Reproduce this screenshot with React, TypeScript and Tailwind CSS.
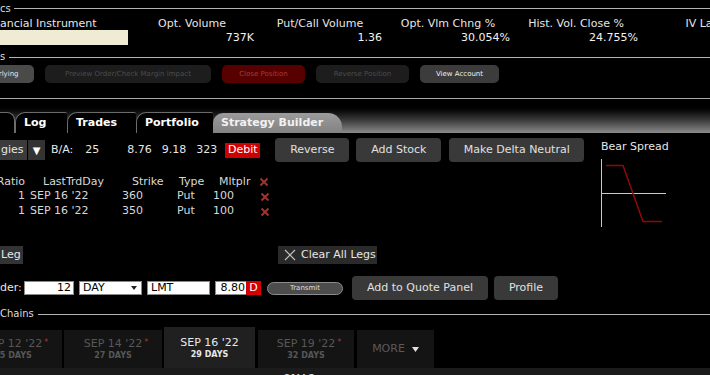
import React from "react";

const RedX = () => (
  <svg width="10" height="10" viewBox="0 0 10 10">
    <path d="M1.5 1.5 L8.5 8.5 M8.5 1.5 L1.5 8.5" stroke="#a0332f" strokeWidth="2" />
  </svg>
);

function SectionHeader({ label, lineGap }: { label: string; lineGap: string }) {
  return (
    <div className="flex h-[14px] items-center">
      <span className="text-[10px] leading-none text-[#dcdcdc]">{label}</span>
      <div className={`${lineGap} h-px flex-1 bg-[#b4b4b4]`} />
    </div>
  );
}

const stats = [
  { label: "Opt. Volume", value: "737K" },
  { label: "Put/Call Volume", value: "1.36" },
  { label: "Opt. Vlm Chng %", value: "30.054%" },
  { label: "Hist. Vol. Close %", value: "24.755%" },
  { label: "IV Last", value: "" },
];

const legs = [
  { ratio: "1", day: "SEP 16 '22", strike: "360", type: "Put", mult: "100" },
  { ratio: "1", day: "SEP 16 '22", strike: "350", type: "Put", mult: "100" },
];

function DateTab({ date, days, star, active, className }: { date: string; days: string; star?: boolean; active?: boolean; className: string }) {
  return (
    <div
      className={`${className} flex shrink-0 flex-col items-center justify-center ${
        active ? "h-[41px] bg-[#202020] text-[#e8e8e8]" : "h-[38px] bg-[#141414] text-[#575757]"
      }`}
    >
      <div className="relative text-[11px] leading-[13px]">
        {date}
        {star && <span className="absolute -right-[6px] -top-[1px] text-[8px] text-[#a33a35]">*</span>}
      </div>
      <div className="text-[8px] font-bold leading-[11px]">{days}</div>
    </div>
  );
}

export default function App() {
  return (
    <div className="relative h-[375px] w-[710px] overflow-hidden bg-black font-['DejaVu_Sans',sans-serif] text-[#e6e6e6]">
      {/* statistics */}
      <div className="flex h-[17px] items-center">
        <span className="text-[10px] leading-none text-[#dcdcdc]">cs</span>
        <div className="ml-[3px] h-px flex-1 bg-[#b4b4b4]" />
      </div>
      <div className="grid grid-cols-[128px_128px_128px_128px_128px_128px] text-[11px] leading-[13px] whitespace-nowrap">
        <div>ancial Instrument</div>
        {stats.map((s) => (
          <div key={s.label} className="text-center">{s.label}</div>
        ))}
        <div className="h-[15px] bg-[#efecd3]" />
        {stats.map((s) => (
          <div key={s.label + "v"} className="pr-[2px] text-right leading-[15px] text-[#f2f2f2]">{s.value}</div>
        ))}
      </div>

      {/* actions */}
      <div className="mt-[5px]">
        <SectionHeader label="s" lineGap="ml-[4px]" />
      </div>
      <div className="mt-[1px] flex h-[18px] gap-[11px] text-[7px] whitespace-nowrap">
        <div className="-ml-[35px] flex w-[69px] shrink-0 items-center justify-center rounded-[5px] bg-[#4a4a4a] text-[#e4e4e4]">Underlying</div>
        <div className="flex w-[166px] shrink-0 items-center justify-center rounded-[5px] bg-[#1d1d1d] text-[#4c4c4c]">Preview Order/Check Margin Impact</div>
        <div className="flex w-[83px] shrink-0 items-center justify-center rounded-[5px] bg-[#580000] text-[#a33c3c]">Close Position</div>
        <div className="flex w-[93px] shrink-0 items-center justify-center rounded-[5px] bg-[#1d1d1d] text-[#4c4c4c]">Reverse Position</div>
        <div className="flex w-[79px] shrink-0 items-center justify-center rounded-[5px] bg-[#3c3c3c] text-[#f0f0f0]">View Account</div>
      </div>
      <div className="mt-[15px] h-px bg-[#a8a8a8]" />

      {/* tabs */}
      <div className="flex h-[34px] items-end bg-linear-to-b from-black from-15% to-[#8c8c8c] text-[11px] font-bold text-white">
        <div className="h-[21px] w-[15px] shrink-0 rounded-tr-[8px] border-t border-r border-[#6c6c6c] bg-black" />
        {[
          { t: "Log", w: "w-[52px]" },
          { t: "Trades", w: "w-[69px]" },
          { t: "Portfolio", w: "w-[77px]" },
        ].map((tab) => (
          <div key={tab.t} className={`${tab.w} flex h-[21px] shrink-0 items-center rounded-tl-[10px] rounded-tr-[2px] border-t border-l border-[#6c6c6c] bg-black pl-[8px]`}>
            {tab.t}
          </div>
        ))}
        <div className="flex h-[20px] w-[129px] shrink-0 items-center rounded-tl-[10px] rounded-tr-[14px] bg-linear-to-b from-[#9c9c9c] to-[#828282] pl-[8px] text-[#f2f2f2]">
          Strategy Builder
        </div>
      </div>

      {/* strategy builder */}
      <div className="flex">
        <div className="w-[601px] shrink-0">
          <div className="mt-[5px] flex h-[24px] items-center text-[11px] whitespace-nowrap">
            <div className="flex h-[20px] w-[27px] items-center bg-[#3b3b3b] pl-[1px]">gies</div>
            <div className="ml-[1px] flex h-[20px] w-[17px] items-center justify-center bg-[#333] text-[10px] text-white">▼</div>
            <span className="ml-[6px]">B/A:</span>
            <span className="ml-[12px]">25</span>
            <span className="ml-[28px]">8.76</span>
            <span className="ml-[10px]">9.18</span>
            <span className="ml-[10px]">323</span>
            <span className="ml-[8px] flex h-[15px] w-[35px] items-center justify-center bg-[#d00000] text-white">Debit</span>
            <button className="ml-[15px] h-[24px] w-[74px] rounded-[4px] bg-[#393939] text-[#e0e0e0]">Reverse</button>
            <button className="ml-[7px] h-[24px] w-[85px] rounded-[4px] bg-[#393939] text-[#e0e0e0]">Add Stock</button>
            <button className="ml-[8px] h-[24px] w-[135px] rounded-[4px] bg-[#393939] text-[#e0e0e0]">Make Delta Neutral</button>
          </div>

          <div className="mt-[13px] grid grid-cols-[28px_92px_55px_36px_46px_20px] text-[11px] whitespace-nowrap text-[#d8d8d8]">
            <div className="flex h-[14px] items-center justify-end pr-[3px]">Ratio</div>
            <div className="flex h-[14px] items-center pl-[15px]">LastTrdDay</div>
            <div className="flex h-[14px] items-center pl-[12px]">Strike</div>
            <div className="flex h-[14px] items-center pl-[4px]">Type</div>
            <div className="flex h-[14px] items-center pl-[8px]">Mltplr</div>
            <div className="flex h-[14px] items-center pl-[2px]"><RedX /></div>
            {legs.map((l) => (
              <React.Fragment key={l.strike}>
                <div className="flex h-[15px] items-center justify-end pr-[3px]">{l.ratio}</div>
                <div className="flex h-[15px] items-center pl-[2px]">{l.day}</div>
                <div className="flex h-[15px] items-center pl-[2px]">{l.strike}</div>
                <div className="flex h-[15px] items-center pl-[2px]">{l.type}</div>
                <div className="flex h-[15px] items-center pl-[2px]">{l.mult}</div>
                <div className="flex h-[15px] items-center pl-[3px]"><RedX /></div>
              </React.Fragment>
            ))}
          </div>

          <div className="mt-[27px] flex h-[18px] text-[11px] whitespace-nowrap">
            <div className="flex w-[23px] items-center bg-[#333] pl-[1px]">Leg</div>
            <div className="ml-[255px] flex w-[99px] items-center bg-[#2a2a2a]">
              <svg width="12" height="12" viewBox="0 0 12 12" className="ml-[6px]">
                <path d="M1 1 L11 11 M11 1 L1 11" stroke="#bdbdbd" strokeWidth="1.2" />
              </svg>
              <span className="ml-[5px]">Clear All Legs</span>
            </div>
          </div>
        </div>

        <div className="pt-[7px]">
          <div className="text-[11px] leading-[14px] text-[#e6e6e6]">Bear Spread</div>
          <svg width="70" height="72" viewBox="0 0 70 72" className="mt-[5px]">
            <path d="M0.5 0 V68" stroke="#c8c8c8" strokeWidth="1" />
            <path d="M0 34.5 H65" stroke="#c8c8c8" strokeWidth="1" />
            <path d="M5 6.5 H22 L42 62.5 H61" stroke="#8e0a0a" strokeWidth="1.5" fill="none" />
          </svg>
        </div>
      </div>

      {/* order row */}
      <div className="mt-[12px] flex h-[24px] items-center text-[11px] whitespace-nowrap">
        <span className="w-[20px]">der:</span>
        <div className="ml-[4px] flex h-[14px] w-[50px] items-center justify-end border border-[#8a8a8a] bg-white pr-[2px] text-black">12</div>
        <div className="ml-[5px] flex h-[14px] w-[63px] items-center justify-between border border-[#8a8a8a] bg-white pl-[3px] pr-[4px] text-black">
          DAY
          <svg width="6" height="4" viewBox="0 0 6 4"><path d="M0 0 H6 L3 4 Z" fill="#222" /></svg>
        </div>
        <div className="ml-[5px] flex h-[14px] w-[63px] items-center border border-[#8a8a8a] bg-white pl-[3px] text-black">LMT</div>
        <div className="ml-[5px] flex h-[14px] w-[31px] items-center justify-end border border-r-0 border-[#8a8a8a] bg-white pr-px text-black">8.80</div>
        <div className="flex h-[14px] w-[15px] items-center justify-center bg-[#d40000] text-white">D</div>
        <div className="ml-[6px] flex h-[13px] w-[76px] items-center justify-center rounded-full border border-[#8c8c8c] bg-[#4c4c4c] text-[7px] text-[#dedede]">Transmit</div>
        <button className="ml-[9px] h-[24px] w-[136px] rounded-[4px] bg-[#393939] text-[#e0e0e0]">Add to Quote Panel</button>
        <button className="ml-[6px] h-[24px] w-[64px] rounded-[4px] bg-[#393939] text-[#e0e0e0]">Profile</button>
      </div>

      {/* option chains */}
      <div className="mt-[7px]">
        <SectionHeader label="Chains" lineGap="ml-[4px]" />
      </div>
      <div className="mt-[6px] flex h-[41px] items-end whitespace-nowrap">
        <DateTab className="-ml-[36px] w-[98px]" date="SEP 12 '22" days="25 DAYS" star />
        <DateTab className="ml-[2px] w-[98px]" date="SEP 14 '22" days="27 DAYS" star />
        <DateTab className="ml-[2px] w-[91px]" date="SEP 16 '22" days="29 DAYS" active />
        <DateTab className="ml-[3px] w-[96px]" date="SEP 19 '22" days="32 DAYS" star />
        <div className="ml-[3px] flex h-[38px] w-[77px] shrink-0 items-center justify-center bg-[#141414] text-[11px] text-[#5a5a5a]">
          MORE
          <svg width="7" height="5" viewBox="0 0 7 5" className="ml-[7px]"><path d="M0 0 H7 L3.5 5 Z" fill="#e0e0e0" /></svg>
        </div>
      </div>
      <div className="h-[20px] bg-[#1b1b1b] pl-[283px] pt-[4px] text-[9px] font-bold text-[#cfcfcf]">CALLS</div>
    </div>
  );
}
